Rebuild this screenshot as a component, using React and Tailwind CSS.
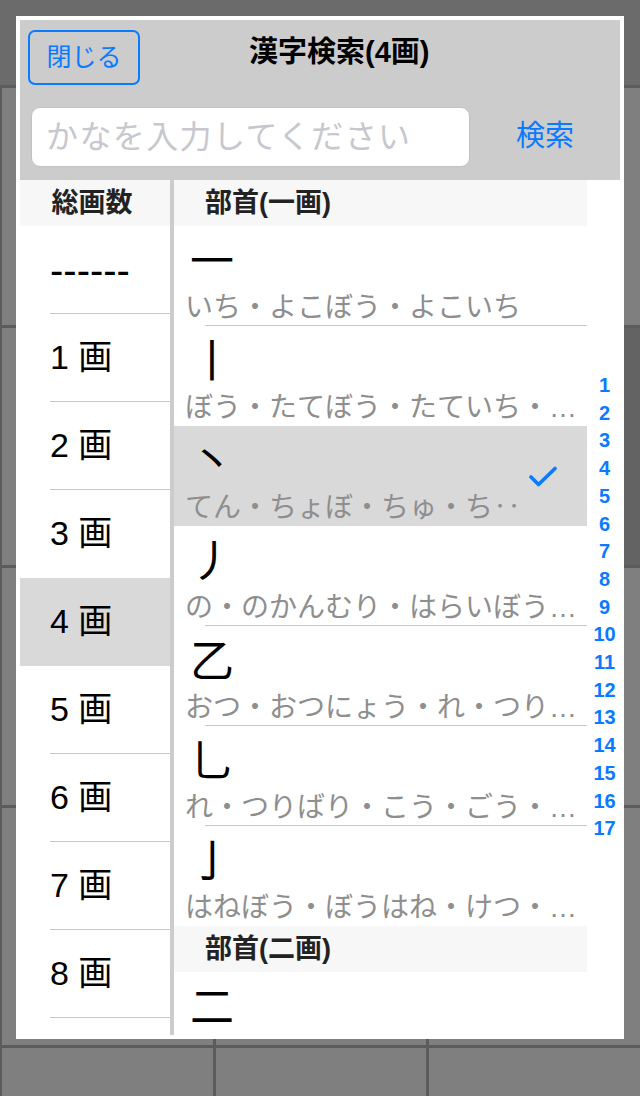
import React from "react";

const FONT = "font-['Liberation_Sans','Noto_Sans_CJK_JP',sans-serif]";

const strokes = ["------", "1 画", "2 画", "3 画", "4 画", "5 画", "6 画", "7 画", "8 画"];
const SELECTED_STROKE = 4;

const radicals1 = [
  { k: "一", r: "いち・よこぼう・よこいち" },
  { k: "丨", r: "ぼう・たてぼう・たていち・…" },
  { k: "丶", r: "てん・ちょぼ・ちゅ・ち‥", sel: true },
  { k: "丿", r: "の・のかんむり・はらいぼう…" },
  { k: "乙", r: "おつ・おつにょう・れ・つり…" },
  { k: "乚", r: "れ・つりばり・こう・ごう・…" },
  { k: "亅", r: "はねぼう・ぼうはね・けつ・…" },
];

function Check() {
  return (
    <svg width="28" height="22" viewBox="0 0 28 22" className="shrink-0">
      <polyline
        points="2,11 9.5,18.5 26,2.5"
        fill="none"
        stroke="#0a7aff"
        strokeWidth="3.6"
        strokeLinecap="round"
        strokeLinejoin="round"
      />
    </svg>
  );
}

function RadicalRow({ item, last }) {
  return (
    <div className={`h-[100px] shrink-0 flex items-center ${item.sel ? "bg-[#d9d9d9]" : ""}`}>
      <div className="flex-1 min-w-0 h-full flex flex-col">
        <div className="pl-[11px] flex-1 flex flex-col">
          <div className="text-[44px] leading-[54px] pt-[9px] text-black pl-[5px]">{item.k}</div>
          {item.r && (
            <div className="mt-[3px] text-[28px] leading-[32px] text-[#8e8e8e] whitespace-nowrap overflow-hidden">
              {item.r}
            </div>
          )}
        </div>
        {!last ? <div className="ml-[31px] h-px bg-[#c8c8c8]" /> : <div className="h-px" />}
      </div>
      {item.sel && (
        <div className="mr-[30px] mt-[2px]">
          <Check />
        </div>
      )}
    </div>
  );
}

export default function App() {
  return (
    <div className={`relative w-[640px] h-[1096px] overflow-hidden bg-[#5c5c5c] ${FONT}`}>
      {/* dimmed page behind */}
      <div className="h-[85px] bg-[#6b6b6b]" />
      <div className="mt-[3px] grid grid-cols-3 gap-[3px] pl-[2px]">
        {Array.from({ length: 15 }).map((_, i) => (
          <div
            key={i}
            className={`h-[237px] ${i === 5 ? "bg-[#636363]" : "bg-[#7f7f7f]"}`}
          />
        ))}
      </div>

      {/* modal */}
      <div className="absolute left-[16px] top-[16px] w-[608px] h-[1023px] bg-white p-[4px] flex flex-col">
        {/* header */}
        <div className="h-[160px] bg-[#cccccc] shrink-0">
          <div className="flex items-start pl-[8px] pt-[10px]">
            <div className="w-[112px] h-[55px] border-2 border-[#0a7aff] rounded-[7px] flex items-center justify-center text-[25px] text-[#0a7aff]">
              閉じる
            </div>
            <div className="ml-[109px] text-[29px] leading-[44px] font-bold text-black">
              漢字検索(4画)
            </div>
          </div>
          <div className="flex items-center mt-[22px] pl-[11px]">
            <input
              readOnly
              placeholder="かなを入力してください"
              className="w-[439px] h-[60px] bg-white rounded-[9px] border border-[#c2c2c2] pl-[14px] text-[32px] tracking-[1.4px] outline-none placeholder:text-[#c7c7cd]"
            />
            <div className="ml-[46px] text-[29px] text-[#0a7aff]">検索</div>
          </div>
        </div>

        {/* body */}
        <div className="flex-1 min-h-0 flex overflow-hidden">
          {/* left column */}
          <div className="w-[150px] shrink-0 flex flex-col">
            <div className="h-[46px] shrink-0 bg-[#f7f7f7] flex items-center justify-center pr-[6px] text-[27px] font-bold text-[#222]">
              総画数
            </div>
            {strokes.map((s, i) => {
              const sel = i === SELECTED_STROKE;
              const hideSep = sel || i + 1 === SELECTED_STROKE;
              return (
                <div key={i} className={`h-[88px] shrink-0 flex flex-col ${sel ? "bg-[#d9d9d9]" : ""}`}>
                  <div
                    className={`flex-1 flex items-center pl-[30px] text-black ${
                      i === 0 ? "text-[40px]" : "text-[34px]"
                    }`}
                  >
                    {s}
                  </div>
                  <div className={`ml-[30px] h-px ${hideSep ? "" : "bg-[#c8c8c8]"}`} />
                </div>
              );
            })}
          </div>

          {/* divider */}
          <div className="w-[4px] bg-[#cccccc] shrink-0" />

          {/* right list */}
          <div className="w-[413px] shrink-0 flex flex-col">
            <div className="h-[46px] shrink-0 bg-[#f7f7f7] flex items-center pl-[31px] text-[27px] font-bold text-[#222]">
              部首(一画)
            </div>
            {radicals1.map((it, i) => (
              <RadicalRow
                key={i}
                item={it}
                last={i === radicals1.length - 1 || it.sel || radicals1[i + 1]?.sel}
              />
            ))}
            <div className="h-[46px] shrink-0 bg-[#f7f7f7] flex items-center pl-[31px] text-[27px] font-bold text-[#222]">
              部首(二画)
            </div>
            <RadicalRow item={{ k: "二" }} last />
          </div>

          {/* index strip */}
          <div className="flex-1 flex flex-col items-center justify-center pl-[2px]">
            {Array.from({ length: 17 }).map((_, i) => (
              <div key={i} className="text-[20px] leading-[27.7px] font-bold text-[#0a7aff]">
                {i + 1}
              </div>
            ))}
          </div>
        </div>
      </div>
    </div>
  );
}
